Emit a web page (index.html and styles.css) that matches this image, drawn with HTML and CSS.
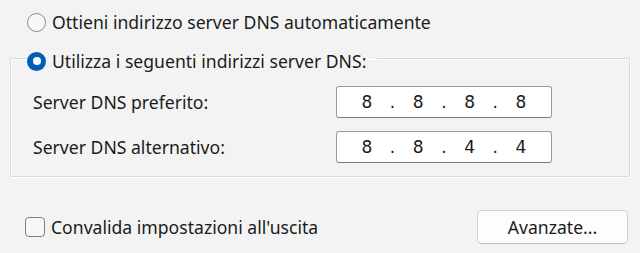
FILE: index.html
```html
<!DOCTYPE html>
<html lang="it">
<head>
<meta charset="utf-8">
<title>DNS</title>
<link rel="stylesheet" href="styles.css">
</head>
<body>
<div class="panel">
  <div class="opt opt-first">
    <span class="radio"></span>
    <span class="opt-text">Ottieni indirizzo server DNS automaticamente</span>
  </div>
  <fieldset class="group">
    <legend class="legend">
      <span class="opt">
        <span class="radio radio-on"><span class="dot"></span></span>
        <span class="opt-text">Utilizza i seguenti indirizzi server DNS:</span>
      </span>
    </legend>
    <div class="fields">
      <div class="field">
        <span class="label">Server DNS preferito:</span>
        <div class="ip">
          <span>8</span><span>.</span><span>8</span><span>.</span><span>8</span><span>.</span><span>8</span>
        </div>
      </div>
      <div class="field">
        <span class="label">Server DNS alternativo:</span>
        <div class="ip">
          <span>8</span><span>.</span><span>8</span><span>.</span><span>4</span><span>.</span><span>4</span>
        </div>
      </div>
    </div>
  </fieldset>
  <div class="bottom">
    <div class="opt check-row">
      <span class="check"></span>
      <span class="opt-text">Convalida impostazioni all'uscita</span>
    </div>
    <button class="btn" type="button">Avanzate...</button>
  </div>
</div>
</body>
</html>
```
FILE: styles.css
```css
html, body {
  margin: 0;
  padding: 0;
  background: #f3f3f3;
}
body {
  width: 640px;
  height: 253px;
  overflow: hidden;
  font-family: "Noto Sans", "Open Sans", sans-serif;
  font-size: 17.6px;
  color: #1b1b1b;
}
.panel {
  padding: 0 10px;
}
.opt {
  display: flex;
  align-items: center;
  height: 20px;
}
.opt-first {
  margin-top: 12px;
  padding-left: 17px;
}
.radio {
  box-sizing: border-box;
  width: 19px;
  height: 19px;
  border-radius: 50%;
  border: 1px solid #8a8a8a;
  background: #f7f7f7;
  display: flex;
  align-items: center;
  justify-content: center;
  flex: none;
}
.radio-on {
  border: none;
  background: #005fb8;
}
.dot {
  width: 8px;
  height: 8px;
  border-radius: 50%;
  background: #ffffff;
}
.opt-text {
  margin-left: 6px;
  white-space: nowrap;
}
.group {
  margin: 13px 0 0 0;
  padding: 0 0 13px 16px;
  border: 1px solid #dadada;
  box-shadow: inset 1px 1px 0 #ffffff, 1px 1px 0 #ffffff;
  min-width: 0;
}
.legend {
  padding: 6px 11px 0 0;
  margin: 0;
}
.fields {
  padding-left: 6px;
  padding-top: 15px;
  display: flex;
  flex-direction: column;
  gap: 13px;
}
.field {
  display: grid;
  grid-template-columns: 303px 216px;
  align-items: center;
}
.label {
  white-space: nowrap;
}
.ip {
  box-sizing: border-box;
  height: 32px;
  background: #ffffff;
  border: 1px solid #9a9a9a;
  border-bottom-color: #7a7a7a;
  border-radius: 3px;
  padding-left: 17px;
  display: grid;
  grid-template-columns: repeat(7, 25.7px);
  align-items: center;
  font-family: "DejaVu Sans", sans-serif;
  font-size: 17px;
  color: #1a1a1a;
}
.ip span {
  text-align: center;
}
.bottom {
  display: flex;
  justify-content: space-between;
  align-items: center;
  margin-top: 33px;
}
.check-row {
  padding-left: 15px;
}
.check {
  box-sizing: border-box;
  width: 20px;
  height: 20px;
  border: 1px solid #7f7f7f;
  border-radius: 4px;
  background: #f7f7f7;
  flex: none;
}
.btn {
  box-sizing: border-box;
  width: 151px;
  height: 34px;
  margin-right: 2px;
  background: #fdfdfd;
  border: 1px solid #d2d2d2;
  border-bottom-color: #bcbcbc;
  border-radius: 5px;
  font-family: "Noto Sans", "Open Sans", sans-serif;
  font-size: 17.6px;
  color: #1b1b1b;
  padding: 0;
}
```
